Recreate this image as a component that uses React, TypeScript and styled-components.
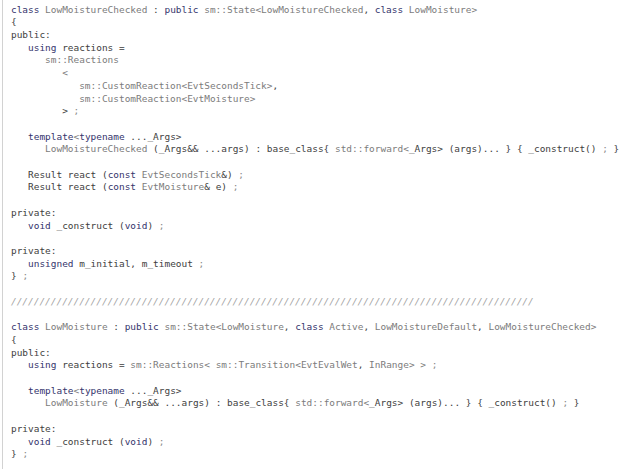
import React from "react";
import styled, { createGlobalStyle } from "styled-components";

const Global = createGlobalStyle`
  html, body { margin: 0; padding: 0; background: #ffffff; }
  body { width: 640px; height: 469px; overflow: hidden; }
`;

const Page = styled.div`
  display: flex;
  height: 469px;
  padding-left: 2px;
  background: #ffffff;
`;

const Editor = styled.pre`
  flex: 1;
  margin: 0;
  padding: 3.6px 0 0 8px;
  border-left: 1px solid #d2d2d2;
  font-family: "DejaVu Sans Mono", monospace;
  font-size: 9.45px;
  line-height: 12.71px;
  color: #3e3e3e;
  white-space: pre;
`;

const Line = styled.div`
  height: 12.71px;
`;

const Tok = styled.span<{ $k: string }>`
  color: ${(p) =>
    p.$k === "kw"
      ? "#34346c"
      : p.$k === "type"
      ? "#7c7c7c"
      : p.$k === "semi"
      ? "#8a8a8a"
      : p.$k === "comment"
      ? "#a2a2a2"
      : "#3e3e3e"};
  font-style: ${(p) => (p.$k === "comment" ? "italic" : "normal")};
`;

const code = `class LowMoistureChecked : public sm::State<LowMoistureChecked, class LowMoisture>
{
public:
   using reactions =
      sm::Reactions
         <
            sm::CustomReaction<EvtSecondsTick>,
            sm::CustomReaction<EvtMoisture>
         > ;

   template<typename ..._Args>
      LowMoistureChecked (_Args&& ...args) : base_class{ std::forward<_Args> (args)... } { _construct() ; }

   Result react (const EvtSecondsTick&) ;
   Result react (const EvtMoisture& e) ;

private:
   void _construct (void) ;

private:
   unsigned m_initial, m_timeout ;
} ;

${"/".repeat(92)}

class LowMoisture : public sm::State<LowMoisture, class Active, LowMoistureDefault, LowMoistureChecked>
{
public:
   using reactions = sm::Reactions< sm::Transition<EvtEvalWet, InRange> > ;

   template<typename ..._Args>
      LowMoisture (_Args&& ...args) : base_class{ std::forward<_Args> (args)... } { _construct() ; }

private:
   void _construct (void) ;
} ;`;

const KW = new Set(["class", "public", "using", "template", "typename", "const", "void", "unsigned", "private"]);
const TYPES = new Set([
  "LowMoistureChecked", "LowMoisture", "Active", "LowMoistureDefault", "EvtSecondsTick",
  "EvtMoisture", "EvtEvalWet", "InRange", "sm", "std", "State", "Reactions",
  "CustomReaction", "Transition", "forward",
]);

function tokenize(line: string): [string, string][] {
  if (/^\/+$/.test(line)) return [["comment", line]];
  const out: [string, string][] = [];
  const re = /([A-Za-z_][A-Za-z0-9_]*)|(::)|(\s+)|(.)/g;
  let m: RegExpExecArray | null;
  let prevType = false;
  while ((m = re.exec(line))) {
    const t = m[0];
    let k = "plain";
    if (m[1]) {
      if (line.startsWith("public:") || line.startsWith("private:")) k = "plain";
      else if (KW.has(t)) k = "kw";
      else if (TYPES.has(t)) k = "type";
    } else if (m[2]) k = "type";
    else if (t === "<") k = prevType || t === "<" ? "type" : "plain";
    else if (t === ">") k = prevType ? "type" : "plain";
    else if (t === ";") k = "semi";
    else if (m[3]) k = "ws";
    if (!m[3]) prevType = k === "type";
    out.push([k, t]);
  }
  return out;
}

export default function App() {
  const lines = code.split("\n");
  return (
    <>
      <Global />
      <Page>
        <Editor>
          {lines.map((l, i) => (
            <Line key={i}>
              {l.length === 0
                ? " "
                : tokenize(l).map(([k, t], j) => (
                    <Tok key={j} $k={k}>
                      {t}
                    </Tok>
                  ))}
            </Line>
          ))}
        </Editor>
      </Page>
    </>
  );
}
